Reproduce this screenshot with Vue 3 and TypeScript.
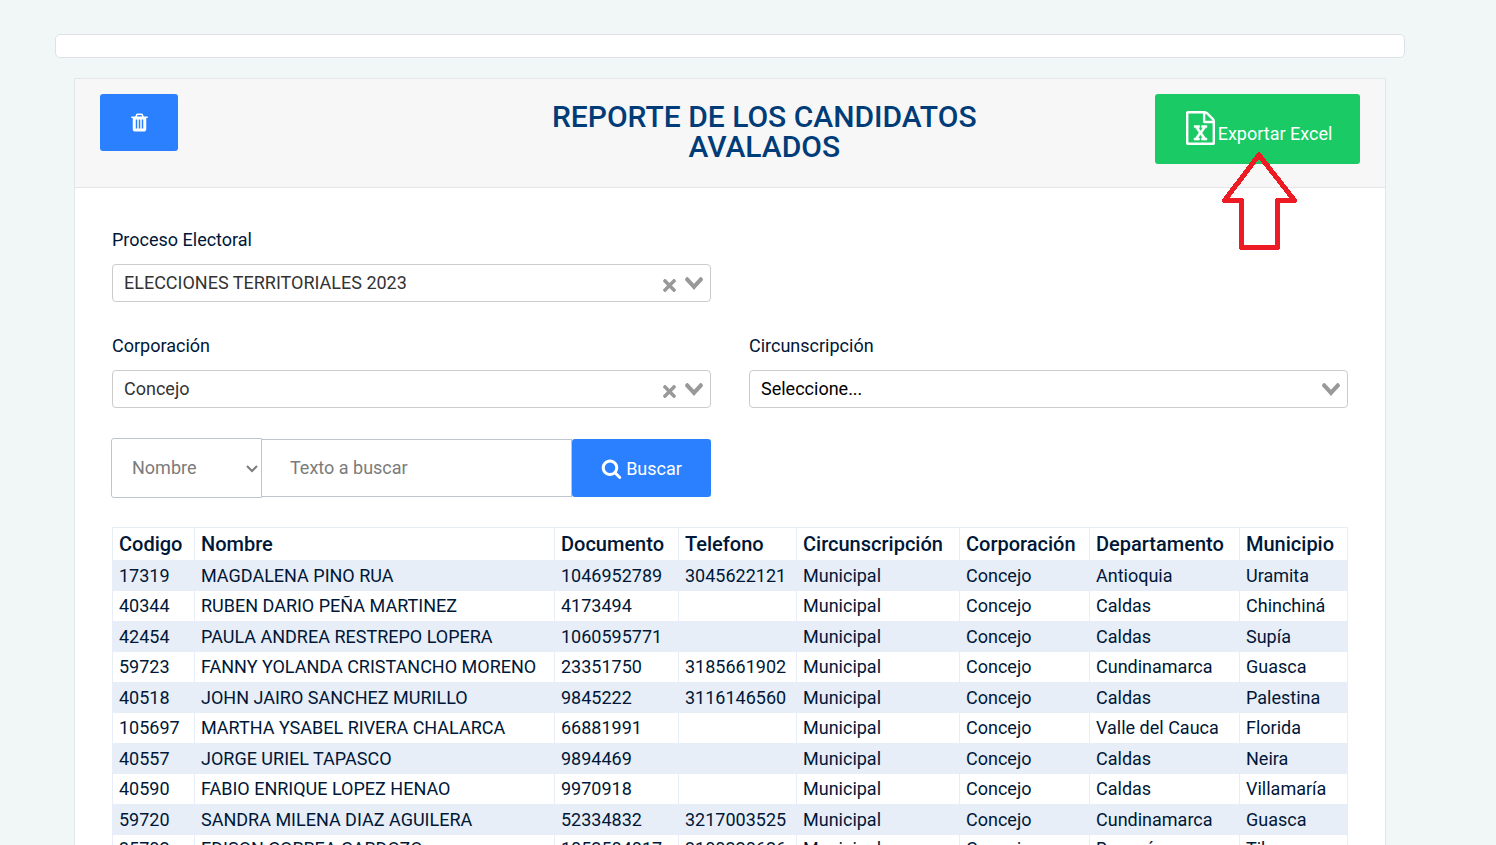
<script setup lang="ts">
import { ref } from 'vue'

interface Candidate {
  code: string
  name: string
  document: string
  phone: string
  department: string
  town: string
}

const process = ref('ELECCIONES TERRITORIALES 2023')
const corporation = ref('Concejo')
const district = ref('')
const field = ref('Nombre')
const query = ref('')

const headings = ['Codigo', 'Nombre', 'Documento', 'Telefono', 'Circunscripción', 'Corporación', 'Departamento', 'Municipio']

const candidates: Candidate[] = [
  { code: '17319', name: 'MAGDALENA PINO RUA', document: '1046952789', phone: '3045622121', department: 'Antioquia', town: 'Uramita' },
  { code: '40344', name: 'RUBEN DARIO PEÑA MARTINEZ', document: '4173494', phone: '', department: 'Caldas', town: 'Chinchiná' },
  { code: '42454', name: 'PAULA ANDREA RESTREPO LOPERA', document: '1060595771', phone: '', department: 'Caldas', town: 'Supía' },
  { code: '59723', name: 'FANNY YOLANDA CRISTANCHO MORENO', document: '23351750', phone: '3185661902', department: 'Cundinamarca', town: 'Guasca' },
  { code: '40518', name: 'JOHN JAIRO SANCHEZ MURILLO', document: '9845222', phone: '3116146560', department: 'Caldas', town: 'Palestina' },
  { code: '105697', name: 'MARTHA YSABEL RIVERA CHALARCA', document: '66881991', phone: '', department: 'Valle del Cauca', town: 'Florida' },
  { code: '40557', name: 'JORGE URIEL TAPASCO', document: '9894469', phone: '', department: 'Caldas', town: 'Neira' },
  { code: '40590', name: 'FABIO ENRIQUE LOPEZ HENAO', document: '9970918', phone: '', department: 'Caldas', town: 'Villamaría' },
  { code: '59720', name: 'SANDRA MILENA DIAZ AGUILERA', document: '52334832', phone: '3217003525', department: 'Cundinamarca', town: 'Guasca' },
  { code: '35702', name: 'EDISON CORREA CARDOZO', document: '1052504017', phone: '3100320626', department: 'Boyacá', town: 'Tibasosa' },
]

const chevron =
  'M9.211364 7.59931l4.48338-4.867229c.407008-.441854.407008-1.158247 0-1.60046l-.73712-.80023c-.407008-.441854-1.066904-.441854-1.474243 0L7 5.198617 2.51662.33139c-.407008-.441853-1.066904-.441853-1.474243 0l-.737121.80023c-.407008.441854-.407008 1.158248 0 1.600461l4.48338 4.867228L7 10l2.211364-2.40069z'
const cross =
  'M6.895455 5l2.842897-2.842898c.348864-.348863.348864-.914488 0-1.263636L9.106534.261648c-.348864-.348864-.914489-.348864-1.263636 0L5 3.104545 2.157102.261648c-.348863-.348864-.914488-.348864-1.263636 0L.261648.893466c-.348864.348864-.348864.914489 0 1.263636L3.104545 5 .261648 7.842898c-.348864.348863-.348864.914488 0 1.263636l.631818.631818c.348864.348864.914773.348864 1.263636 0L5 6.895455l2.842898 2.842897c.348863.348864.914772.348864 1.263636 0l.631818-.631818c.348864-.348864.348864-.914489 0-1.263636L6.895455 5z'
</script>

<template>
  <div class="page">
    <div class="strip"></div>
    <main class="card">
      <header class="card-head">
        <div>
          <button class="btn trash" type="button" aria-label="Limpiar">
            <svg width="21" height="21" viewBox="0 0 1792 1792" fill="currentColor" aria-hidden="true">
              <path d="M704 1376V672q0-14-9-23t-23-9h-64q-14 0-23 9t-9 23v704q0 14 9 23t23 9h64q14 0 23-9t9-23zm256 0V672q0-14-9-23t-23-9h-64q-14 0-23 9t-9 23v704q0 14 9 23t23 9h64q14 0 23-9t9-23zm256 0V672q0-14-9-23t-23-9h-64q-14 0-23 9t-9 23v704q0 14 9 23t23 9h64q14 0 23-9t9-23zM672 384h448l-48-117q-7-9-17-11H738q-10 2-17 11zm928 32v64q0 14-9 23t-23 9h-96v948q0 83-47 143.5t-113 60.5H480q-66 0-113-58.5T320 1464V512h-96q-14 0-23-9t-9-23v-64q0-14 9-23t23-9h309l70-167q15-37 54-63t79-26h320q40 0 79 26t54 63l70 167h309q14 0 23 9t9 23z" />
            </svg>
          </button>
        </div>
        <h1 class="title">REPORTE DE LOS CANDIDATOS AVALADOS</h1>
        <div class="export-area">
          <button class="btn export" type="button">
            <svg width="29" height="34" viewBox="0 0 1536 1792" fill="currentColor" aria-hidden="true">
              <path d="M1468 380q28 28 48 76t20 88v1152q0 40-28 68t-68 28H96q-40 0-68-28t-28-68V96q0-40 28-68T96 0h896q40 0 88 20t76 48zm-444-244v376h376q-10-29-22-41L1065 158q-12-12-41-22zm384 1528V640H992q-40 0-68-28t-28-68V128H128v1536h1280z" />
              <path stroke="currentColor" stroke-width="30" d="M429 1430v106h281v-106h-75l103-161q5-7 10-16.5t7.5-13.5 3.5-4h2q1 4 5 10 2 4 4.5 7.500t6 8 6.500 8.500l107 161h-76v106h291v-106h-68l-192-273 195-282h67V768H828v107h74l-103 159q-4 7-10 16.500t-9 13.500l-2 3h-2q-1-4-5-10-6-11-17-23L648 875h76V768H434v107h68l189 272-194 283h-68z" />
            </svg>
            <span>Exportar Excel</span>
          </button>
          <svg class="pointer" width="76" height="100" viewBox="0 0 76 100" aria-hidden="true">
            <path d="M38 4L3.500 49.500H20.500V96.500H56.500V49.500H73.500Z" fill="none" stroke="#ed1c24" stroke-width="5" stroke-linejoin="round" shape-rendering="crispEdges" />
          </svg>
        </div>
      </header>

      <section class="card-body">
        <form class="filters" @submit.prevent>
          <div class="group first">
            <label for="process">Proceso Electoral</label>
            <div class="picker">
              <select id="process" v-model="process">
                <option>ELECCIONES TERRITORIALES 2023</option>
              </select>
              <div class="marks">
                <button class="clear" type="button" aria-label="Quitar proceso electoral">
                  <svg width="13" height="13" viewBox="0 0 10 10" fill="currentColor"><path :d="cross" /></svg>
                </button>
                <svg width="18" height="13" viewBox="0 0 14 10" fill="currentColor" aria-hidden="true"><path :d="chevron" /></svg>
              </div>
            </div>
          </div>
          <div class="group">
            <label for="corporation">Corporación</label>
            <div class="picker">
              <select id="corporation" v-model="corporation">
                <option>Concejo</option>
              </select>
              <div class="marks">
                <button class="clear" type="button" aria-label="Quitar corporación">
                  <svg width="13" height="13" viewBox="0 0 10 10" fill="currentColor"><path :d="cross" /></svg>
                </button>
                <svg width="18" height="13" viewBox="0 0 14 10" fill="currentColor" aria-hidden="true"><path :d="chevron" /></svg>
              </div>
            </div>
          </div>
          <div class="group">
            <label for="district">Circunscripción</label>
            <div class="picker">
              <select id="district" v-model="district" class="empty">
                <option value="">Seleccione...</option>
              </select>
              <div class="marks">
                <svg width="18" height="13" viewBox="0 0 14 10" fill="currentColor" aria-hidden="true"><path :d="chevron" /></svg>
              </div>
            </div>
          </div>
          <div class="search">
            <div class="field">
              <select v-model="field" aria-label="Campo de búsqueda">
                <option>Nombre</option>
              </select>
              <svg width="12" height="8" viewBox="0 0 12 8" fill="none" stroke="currentColor" stroke-width="2" aria-hidden="true"><path d="M1 1L6 6L11 1" /></svg>
            </div>
            <input v-model="query" type="text" placeholder="Texto a buscar" aria-label="Texto a buscar" />
            <button class="btn find" type="submit">
              <svg width="21" height="21" viewBox="0 0 1792 1792" fill="currentColor" aria-hidden="true">
                <path d="M1216 832q0-185-131.500-316.500T768 384 451.500 515.500 320 832t131.500 316.500T768 1280t316.500-131.500T1216 832zm512 832q0 52-38 90t-90 38q-54 0-90-38l-343-342q-179 124-399 124-143 0-273.500-55.500t-225-150-150-225T64 832t55.500-273.500 150-225 225-150T768 128t273.500 55.500 225 150 150 225T1472 832q0 220-124 399l343 343q37 37 37 90z" />
              </svg>
              <span>Buscar</span>
            </button>
          </div>
        </form>

        <table>
          <colgroup>
            <col class="c-code" /><col /><col class="c-doc" /><col class="c-phone" />
            <col class="c-district" /><col class="c-corp" /><col class="c-dept" /><col class="c-town" />
          </colgroup>
          <thead>
            <tr><th v-for="h in headings" :key="h" scope="col">{{ h }}</th></tr>
          </thead>
          <tbody>
            <tr v-for="c in candidates" :key="c.code">
              <td>{{ c.code }}</td>
              <td>{{ c.name }}</td>
              <td>{{ c.document }}</td>
              <td>{{ c.phone }}</td>
              <td>Municipal</td>
              <td>Concejo</td>
              <td>{{ c.department }}</td>
              <td>{{ c.town }}</td>
            </tr>
          </tbody>
        </table>
      </section>
    </main>
  </div>
</template>

<style>
html,
body {
  background: #f1f7f7;
}
</style>

<style scoped>
.page {
  box-sizing: border-box;
  height: 100vh;
  overflow: hidden;
  padding: 34px 91px 0 55px;
  font-family: Roboto, "Liberation Sans", sans-serif;
  font-size: 18px;
  color: #001737;
  background: #f1f7f7;
}
.page *,
.page *::before {
  box-sizing: border-box;
}
button,
input,
select {
  margin: 0;
  font: inherit;
}
.strip {
  height: 24px;
  border: 1px solid #dee2e6;
  border-radius: 5px;
  background: #fff;
}
.card {
  margin: 20px 19px 0;
  border: 1px solid #e3e7e9;
  background: #fff;
}
.card-head {
  display: grid;
  grid-template-columns: 41fr 50fr 34fr;
  align-items: start;
  padding: 15px 25px 23px;
  border-bottom: 1px solid #e3e7e9;
  background: #f7f7f7;
}
.btn {
  display: inline-flex;
  align-items: center;
  justify-content: center;
  border: 0;
  border-radius: 3px;
  color: #fff;
  cursor: pointer;
}
.trash {
  width: 78px;
  height: 57px;
  background: #2b80ff;
}
.title {
  margin: 8px 0 0;
  padding: 0 28px 0 26px;
  font-size: 30px;
  line-height: 30px;
  font-weight: 500;
  text-align: center;
  color: #003c77;
}
.export-area {
  position: relative;
  display: flex;
  justify-content: flex-end;
}
.export {
  gap: 3px;
  width: 205px;
  height: 70px;
  padding: 0 0 2px 3px;
  background: #19ca65;
}
.export span {
  padding-top: 10px;
}
.pointer {
  position: absolute;
  top: 57px;
  right: 63px;
}
.card-body {
  padding: 38px 37px;
}
.filters {
  display: grid;
  grid-template-columns: 1fr 1fr;
  column-gap: 38px;
  row-gap: 30px;
}
.group {
  display: flex;
  flex-direction: column;
  gap: 10px;
}
.first {
  grid-column: 1;
  grid-row: 1;
}
.first + .group {
  grid-column: 1;
}
label {
  line-height: 28px;
}
.picker {
  position: relative;
}
.picker select {
  display: block;
  width: 100%;
  height: 38px;
  padding: 0 60px 2px 11px;
  border: 1px solid #ccc;
  border-radius: 4px;
  appearance: none;
  background: #fff;
  color: #333;
}
.picker .empty {
  color: #000;
}
.marks {
  position: absolute;
  top: 0;
  right: 8px;
  display: flex;
  align-items: center;
  gap: 9px;
  height: 38px;
  color: #999;
  pointer-events: none;
}
.clear {
  display: flex;
  padding: 4px 0 0;
  border: 0;
  background: none;
  color: inherit;
  pointer-events: auto;
}
.search {
  grid-column: 1;
  display: flex;
  align-items: center;
  margin-left: -1px;
  color: #7b7b7b;
}
.field {
  position: relative;
  flex: none;
  width: 151px;
}
.field select {
  display: block;
  width: 100%;
  height: 60px;
  padding: 0 20px 2px;
  border: 1px solid #c0c4d0;
  border-radius: 3px 0 0 3px;
  appearance: none;
  background: #fff;
  color: inherit;
}
.field svg {
  position: absolute;
  top: 27px;
  right: 4px;
  pointer-events: none;
}
.search input {
  flex: 1;
  min-width: 0;
  height: 58px;
  padding: 0 28px 2px;
  border: 1px solid #c0c4d0;
  border-left: 0;
  background: #fff;
  color: #333;
}
.search input::placeholder {
  color: #7b7b7b;
  opacity: 1;
}
.find {
  gap: 4px;
  flex: none;
  width: 139px;
  height: 58px;
  background: #2b80ff;
}
table {
  width: 100%;
  margin-top: 29px;
  border-collapse: collapse;
  table-layout: fixed;
  border: 1px solid #e7eef8;
}
th,
td {
  height: 30px;
  padding: 0 6px;
  border-left: 1px solid #e7eef8;
  line-height: 28px;
  text-align: left;
  white-space: nowrap;
}
th {
  height: 32px;
  padding-top: 1px;
  font-size: 20px;
  font-weight: 500;
}
tbody tr:nth-child(odd) {
  background: #e7eef8;
}
tbody tr:nth-child(odd) td {
  height: 31px;
  padding-top: 2px;
}
.c-code {
  width: 82px;
}
.c-doc {
  width: 124px;
}
.c-phone {
  width: 118px;
}
.c-district {
  width: 163px;
}
.c-corp {
  width: 130px;
}
.c-dept {
  width: 150px;
}
.c-town {
  width: 108px;
}
</style>
